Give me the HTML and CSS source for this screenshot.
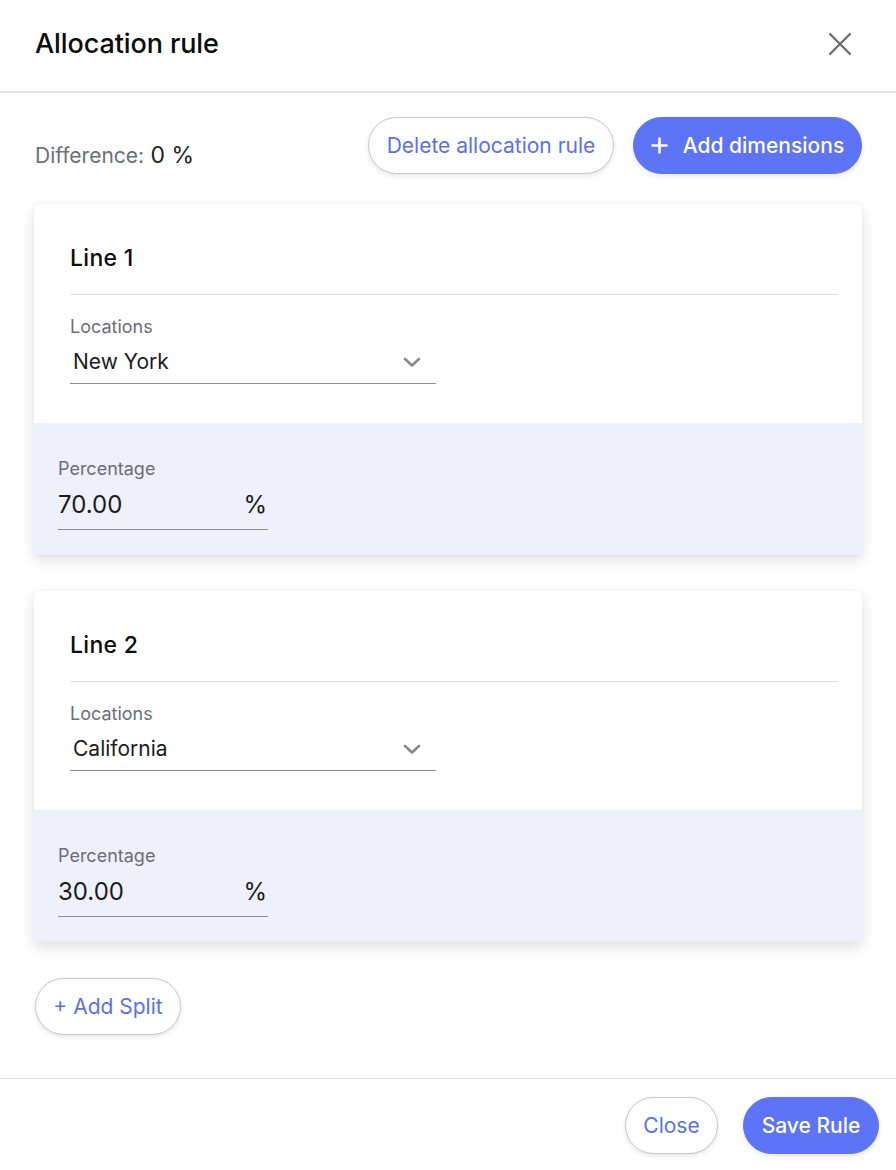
FILE: index.html
```html
<!DOCTYPE html>
<html lang="en">
<head>
<meta charset="utf-8">
<title>Allocation rule</title>
<link rel="stylesheet" href="styles.css">
</head>
<body>
<div class="dialog">
  <header class="dlg-header">
    <h1 class="dlg-title">Allocation rule</h1>
    <button class="icon-btn" aria-label="Close">
      <svg width="24" height="24" viewBox="0 0 24 24"><path d="M2 2L22 22M22 2L2 22" stroke="#6b6b6b" stroke-width="2.2" stroke-linecap="round" fill="none"/></svg>
    </button>
  </header>

  <main class="dlg-body">
    <div class="toolbar">
      <div class="diff"><span class="diff-label">Difference:</span> <span class="diff-value">0 %</span></div>
      <div class="toolbar-actions">
        <button class="btn btn-outline btn-delete">Delete allocation rule</button>
        <button class="btn btn-primary btn-add">
          <svg width="17" height="17" viewBox="0 0 17 17"><path d="M8.5 1.5V15.5M1.5 8.5H15.5" stroke="#fff" stroke-width="2.6" stroke-linecap="round"/></svg>
          <span>Add dimensions</span>
        </button>
      </div>
    </div>

    <section class="card">
      <div class="card-top">
        <h2 class="line-title">Line 1</h2>
        <div class="divider"></div>
        <label class="field-label">Locations</label>
        <div class="select">
          <span class="select-value">New York</span>
          <svg class="chevron" width="18" height="11" viewBox="0 0 18 11"><path d="M2 2L9 8.5L16 2" stroke="#8a8a8a" stroke-width="2.6" fill="none" stroke-linecap="round" stroke-linejoin="round"/></svg>
        </div>
      </div>
      <div class="card-bottom">
        <label class="field-label">Percentage</label>
        <div class="pct-input"><span class="pct-value">70.00</span><span class="pct-sign">%</span></div>
      </div>
    </section>

    <section class="card">
      <div class="card-top">
        <h2 class="line-title">Line 2</h2>
        <div class="divider"></div>
        <label class="field-label">Locations</label>
        <div class="select">
          <span class="select-value">California</span>
          <svg class="chevron" width="18" height="11" viewBox="0 0 18 11"><path d="M2 2L9 8.5L16 2" stroke="#8a8a8a" stroke-width="2.6" fill="none" stroke-linecap="round" stroke-linejoin="round"/></svg>
        </div>
      </div>
      <div class="card-bottom">
        <label class="field-label">Percentage</label>
        <div class="pct-input"><span class="pct-value">30.00</span><span class="pct-sign">%</span></div>
      </div>
    </section>

    <div class="split-row">
      <button class="btn btn-outline btn-split">+ Add Split</button>
    </div>
  </main>

  <footer class="dlg-footer">
    <button class="btn btn-outline btn-close">Close</button>
    <button class="btn btn-primary btn-save">Save Rule</button>
  </footer>
</div>
</body>
</html>
```

FILE: styles.css
```css
* { box-sizing: border-box; }

html, body {
  margin: 0;
  padding: 0;
  background: #ffffff;
  font-family: Inter, "Noto Sans", "Liberation Sans", sans-serif;
  color: #111111;
}

.dialog {
  width: 896px;
  min-height: 1170px;
  display: flex;
  flex-direction: column;
}

.dlg-header {
  height: 93px;
  border-bottom: 2px solid #e3e3e3;
  display: flex;
  align-items: center;
  justify-content: space-between;
  padding: 0 44px 0 35px;
}

.dlg-title {
  margin: 0;
  font-size: 27px;
  font-weight: 500;
  letter-spacing: -0.1px;
  color: #0c0c0c;
  line-height: 30px;
  margin-top: -3px;
}

.icon-btn {
  background: none;
  border: 0;
  padding: 0;
  width: 24px;
  height: 24px;
  display: flex;
  margin-top: -3px;
}

.dlg-body {
  padding: 24px 34px 0 34px;
}

.toolbar {
  display: flex;
  justify-content: space-between;
  align-items: flex-start;
}

.diff {
  margin-top: 25px;
  margin-left: 1px;
  line-height: 26px;
}

.diff-label {
  font-size: 21px;
  color: #6b6e76;
}

.diff-value {
  font-size: 23px;
  color: #222;
  margin-left: 2px;
}

.toolbar-actions {
  display: flex;
  gap: 19px;
}

.btn {
  font-family: inherit;
  font-size: 21px;
  height: 57px;
  border-radius: 29px;
  padding: 0 12px;
  display: inline-flex;
  align-items: center;
  justify-content: center;
  gap: 15px;
  cursor: pointer;
  box-shadow: 0 2px 5px rgba(0, 0, 0, 0.10);
  white-space: nowrap;
}

.btn-outline {
  background: #ffffff;
  border: 1px solid #c7c7cc;
  color: #5a6ff2;
}

.btn-primary {
  background: #5c74f5;
  border: 1px solid #5c74f5;
  color: #ffffff;
  font-weight: 500;
}

.btn-delete { width: 246px; }
.btn-add { width: 229px; }

.card {
  margin-top: 30px;
  background: #ffffff;
  border-radius: 3px;
  box-shadow: 0 5px 14px rgba(0, 0, 0, 0.13), 0 0 2px rgba(0, 0, 0, 0.05);
  overflow: hidden;
}

.card + .card { margin-top: 36px; }

.card-top {
  padding: 40px 24px 39px 36px;
}

.line-title {
  margin: 0;
  font-size: 23px;
  font-weight: 500;
  letter-spacing: 0.3px;
  line-height: 28px;
  color: #0c0c0c;
}

.divider {
  height: 1px;
  background: #dedede;
  margin-top: 22px;
}

.field-label {
  display: block;
  font-size: 18px;
  line-height: 20px;
  color: #6b6e76;
}

.card-top .field-label { margin-top: 22px; }

.select {
  width: 366px;
  display: flex;
  align-items: center;
  justify-content: space-between;
  padding: 11px 15px 7px 3px;
  border-bottom: 1px solid #8e8e8e;
}

.select-value {
  font-size: 21px;
  line-height: 28px;
  color: #1b1b1b;
}

.chevron { display: block; }

.card-bottom {
  background: #eef0fc;
  padding: 36px 24px 25px 24px;
}

.pct-input {
  width: 210px;
  display: flex;
  justify-content: space-between;
  align-items: center;
  padding: 12px 1px 10px 0;
  border-bottom: 1px solid #8e8e8e;
}

.pct-value,
.pct-sign {
  font-size: 24px;
  line-height: 28px;
  color: #1b1b1b;
}

.split-row {
  margin-top: 36px;
  padding-left: 1px;
  padding-bottom: 43px;
}

.btn-split {
  width: 146px;
  height: 57px;
}

.dlg-footer {
  border-top: 1px solid #e3e3e3;
  display: flex;
  justify-content: flex-end;
  gap: 25px;
  padding: 18px 17px 0 0;
}

.btn-close { width: 93px; }
.btn-save { width: 136px; font-weight: 500; }
```
